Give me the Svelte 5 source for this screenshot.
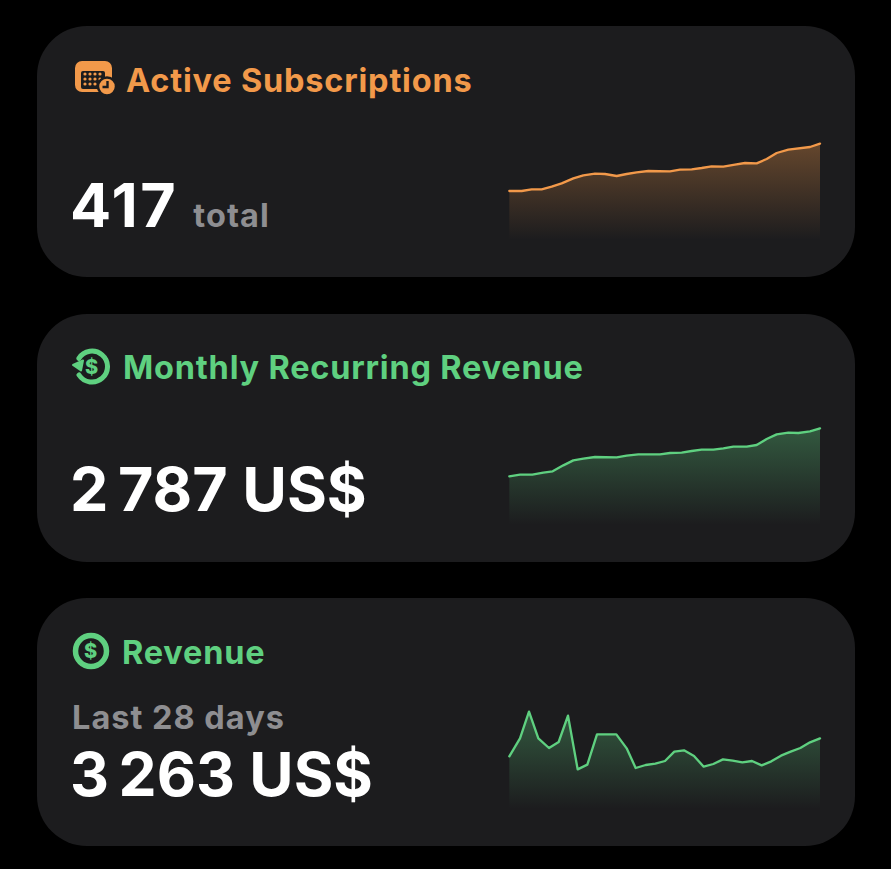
<script>
  const cards = [
    {
      id: 'subs',
      title: 'Active Subscriptions',
      color: '#f2994a',
      icon: 'calendar',
      value: '417',
      unit: 'total',
      line: '28,183 65,183 95,178 125,178 155,170 185,160 220,145 250,136 285,131 315,132 350,138 380,132 410,127 445,123 510,124 540,119 575,118 605,114 635,109 670,110 705,104 735,99 770,100 800,87 830,69 865,59 930,51 960,41'
    },
    {
      id: 'mrr',
      title: 'Monthly Recurring Revenue',
      color: '#5fd080',
      icon: 'recurring',
      value: '2\u202f787 US$',
      line: '28,184 60,179 97,179 130,173 158,169 190,151 220,136 250,131 285,126 350,127 380,122 415,118 480,118 510,114 545,113 575,108 605,104 640,104 670,100 700,95 740,95 770,90 800,72 830,58 865,53 895,54 930,49 960,40'
    },
    {
      id: 'rev',
      title: 'Revenue',
      color: '#5fd080',
      icon: 'dollar',
      label: 'Last 28 days',
      value: '3\u202f263 US$',
      line: '28,172 60,118 87,38 115,118 147,147 176,129 204,50 233,211 262,197 291,106 349,106 380,148 407,207 437,198 466,194 495,186 523,158 552,154 582,171 611,203 640,195 669,181 698,185 727,190 756,186 785,199 814,187 843,170 872,158 901,147 930,130 960,118'
    }
  ];

  function area(line) {
    return `28,330 ${line} 960,330`;
  }
</script>

<main class="page">
  {#each cards as c}
    <section class="card {c.id}" style="--accent:{c.color}">
      <h2 class="title">
        {#if c.icon === 'calendar'}
          <svg class="icon calendar" viewBox="0 0 44 40" aria-hidden="true">
            <rect x="1" y="2" width="37" height="31" rx="7" fill={c.color} />
            <rect x="7" y="12" width="24" height="18" rx="2" fill="#1c1c1e" />
            {#each [11, 16, 21, 26] as x}
              {#each [15, 20, 25] as y}
                <circle cx={x} cy={y} r="1.6" fill={c.color} />
              {/each}
            {/each}
            <circle cx="33" cy="27.500" r="9" fill={c.color} stroke="#1c1c1e" stroke-width="2.500" />
            <path d="M33.500 22v6h-5" fill="none" stroke="#1c1c1e" stroke-width="2.400" />
          </svg>
        {:else if c.icon === 'recurring'}
          <svg class="icon recurring" viewBox="0 0 40 40" aria-hidden="true">
            <path d="M8.900 12.300A15.500 15.500 0 1 1 9 29" fill="none" stroke={c.color} stroke-width="5" stroke-linecap="round" />
            <path d="M3 19L13 14.500 11 24.500Z" fill={c.color} stroke={c.color} stroke-width="2" stroke-linejoin="round" />
            <text x="22" y="27.500" class="glyph" fill={c.color}>$</text>
          </svg>
        {:else}
          <svg class="icon dollar" viewBox="0 0 40 40" aria-hidden="true">
            <circle cx="20" cy="20" r="15.500" fill="none" stroke={c.color} stroke-width="5.500" />
            <text x="20" y="27" class="glyph" fill={c.color}>$</text>
          </svg>
        {/if}
        <span>{c.title}</span>
      </h2>

      <div class="body">
        <div class="figures">
          {#if c.label}<div class="label">{c.label}</div>{/if}
          <div class="value">{c.value}{#if c.unit}<span class="unit">{c.unit}</span>{/if}</div>
        </div>
        <svg class="chart" viewBox="0 0 990 360" aria-hidden="true">
          <defs>
            <linearGradient id="fill-{c.id}" x1="0" y1="0" x2="0" y2="1">
              <stop offset="0" stop-color={c.color} stop-opacity="0.34" />
              <stop offset="1" stop-color={c.color} stop-opacity="0" />
            </linearGradient>
          </defs>
          <polygon points={area(c.line)} fill="url(#fill-{c.id})" />
          <polyline points={c.line} fill="none" stroke={c.color} stroke-width="7" stroke-linejoin="round" stroke-linecap="round" />
        </svg>
      </div>
    </section>
  {/each}
</main>

<style>
  :global(body) {
    margin: 0;
    background: #000;
  }
  .page {
    display: flex;
    flex-direction: column;
    gap: 36.5px;
    box-sizing: border-box;
    width: 891px;
    height: 869px;
    padding: 26px 36px 0 37px;
    font-family: Inter, "Liberation Sans", sans-serif;
  }
  .card {
    display: flex;
    flex-direction: column;
    justify-content: space-between;
    box-sizing: border-box;
    height: 248px;
    padding: 34px 25px 27px 35px;
    background: #1c1c1e;
    border-radius: 50px;
  }
  .card.subs {
    height: 251px;
  }
  .title {
    display: flex;
    align-items: center;
    margin: 0;
    height: 40px;
    color: var(--accent);
    font-size: 32.5px;
    font-weight: 700;
    letter-spacing: 0.8px;
  }
  .icon {
    flex: none;
    height: 40px;
  }
  .icon.calendar {
    width: 44px;
    margin: -3px 8px 0 2px;
  }
  .icon.recurring {
    width: 40px;
    margin: -3px 13px 0 -2px;
  }
  .icon.dollar {
    width: 40px;
    margin: -3px 11px 0 -1px;
  }
  .glyph {
    font-size: 20px;
    font-weight: 800;
    text-anchor: middle;
  }
  .body {
    display: flex;
    align-items: flex-end;
    justify-content: space-between;
  }
  .figures {
    margin-bottom: 12.5px;
  }
  .label {
    margin-bottom: 6px;
    color: #8e8e91;
    font-size: 32.5px;
    font-weight: 700;
    letter-spacing: 1px;
    line-height: 34px;
  }
  .value {
    margin-left: -2px;
    color: #fff;
    font-size: 61px;
    font-weight: 700;
    line-height: 66px;
  }
  .rev .value {
    font-size: 60.5px;
  }
  .subs .value {
    letter-spacing: 2.5px;
  }
  .unit {
    margin-left: 15px;
    color: #8e8e91;
    font-size: 32.5px;
    letter-spacing: 1.1px;
    line-height: 1;
  }
  .chart {
    flex: none;
    width: 330px;
    height: 120px;
  }
</style>
